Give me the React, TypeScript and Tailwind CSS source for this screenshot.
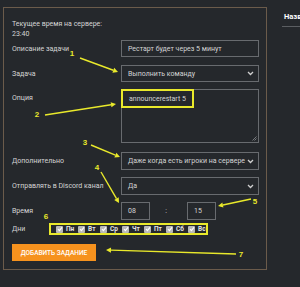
import React from "react";

const yellow = "#e9e92b";

function Chevron() {
  return (
    <svg width="7" height="5" viewBox="0 0 7 5" className="shrink-0">
      <path d="M1 1 L3.5 3.5 L6 1" stroke="#cfcfcf" strokeWidth="1.3" fill="none" />
    </svg>
  );
}

function Select(props: { value: string }) {
  return (
    <div className="flex h-[18px] w-[138px] items-center justify-between border border-[#686b6f] pl-[6px] pr-[4px]">
      <span className="whitespace-nowrap">{props.value}</span>
      <Chevron />
    </div>
  );
}

function Row(props: { label: string; children: React.ReactNode; className?: string }) {
  return (
    <div className={"flex items-center " + (props.className || "")}>
      <div className="w-[109px] shrink-0 whitespace-nowrap">{props.label}</div>
      {props.children}
    </div>
  );
}

function Check() {
  return (
    <span className="flex h-[7px] w-[7px] shrink-0 items-center justify-center rounded-[1px] bg-[#b9b9b9]">
      <svg width="6" height="6" viewBox="0 0 6 6">
        <path d="M1 3.2 L2.4 4.6 L5 1.4" stroke="#ffffff" strokeWidth="1.1" fill="none" />
      </svg>
    </span>
  );
}

function Arrow(props: { x1: number; y1: number; x2: number; y2: number }) {
  const { x1, y1, x2, y2 } = props;
  const a = Math.atan2(y2 - y1, x2 - x1);
  const len = 5;
  const w = 2.6;
  const bx = x2 - len * Math.cos(a);
  const by = y2 - len * Math.sin(a);
  const px = -Math.sin(a) * w;
  const py = Math.cos(a) * w;
  return (
    <g>
      <line x1={x1} y1={y1} x2={bx} y2={by} stroke={yellow} strokeWidth="1.4" />
      <polygon points={`${x2},${y2} ${bx + px},${by + py} ${bx - px},${by - py}`} fill={yellow} />
    </g>
  );
}

export default function App() {
  const days = ["Пн", "Вт", "Ср", "Чт", "Пт", "Сб", "Вс"];
  const nums: [string, number, number][] = [
    ["1", 72, 56],
    ["2", 37, 117],
    ["3", 85, 145],
    ["4", 97, 170],
    ["5", 255, 204],
    ["6", 46, 219],
    ["7", 241, 257],
  ];

  return (
    <div className="relative flex h-[287px] w-[300px] overflow-hidden bg-[#25282c] font-['Roboto','Liberation_Sans',Arial,sans-serif] text-[7px] leading-[10px] text-[#d4d4d4]">
      <div className="ml-[3px] mt-[7px] h-[263px] w-[264px] shrink-0 border border-[#6b5b4b] pl-[8px] pr-[7px] pt-[11px]">
        <div>Текущее время на сервере:</div>
        <div>23:40</div>

        <Row label="Описание задачи" className="mt-[1px]">
          <div className="flex h-[17px] w-[138px] items-center whitespace-nowrap border border-[#686b6f] pl-[6px]">
            Рестарт будет через 5 минут
          </div>
        </Row>

        <Row label="Задача" className="mt-[8px]">
          <div className="flex h-[17px] w-[138px] items-center justify-between border border-[#686b6f] pl-[6px] pr-[4px]">
            <span>Выполнить команду</span>
            <Chevron />
          </div>
        </Row>

        <div className="mt-[7px] flex">
          <div className="w-[109px] shrink-0 pt-[4px]">Опция</div>
          <div className="relative h-[54px] w-[138px] border border-[#686b6f]">
            <div
              className="absolute left-[-1px] top-[-1px] flex h-[19px] w-[73px] items-center whitespace-nowrap border-2 pl-[6px]"
              style={{ borderColor: yellow }}
            >
              announcerestart 5
            </div>
            <svg width="5" height="5" viewBox="0 0 5 5" className="absolute bottom-[1px] right-[1px]">
              <path d="M0.5 4.5 L4.5 0.5 M2.5 4.5 L4.5 2.5" stroke="#8a8d91" strokeWidth="0.8" />
            </svg>
          </div>
        </div>

        <Row label="Дополнительно" className="mt-[9px]">
          <Select value="Даже когда есть игроки на сервере" />
        </Row>

        <Row label="Отправлять в Discord канал" className="mt-[7px]">
          <Select value="Да" />
        </Row>

        <Row label="Время" className="mt-[7px]">
          <div className="flex items-center">
            <div className="flex h-[18px] w-[29px] items-center border border-[#686b6f] pl-[6px]">08</div>
            <div className="w-[37px] pr-[5px] text-center">:</div>
            <div className="flex h-[18px] w-[29px] items-center border border-[#686b6f] pl-[6px]">15</div>
          </div>
        </Row>

        <div className="mt-[3px] flex items-center">
          <div className="w-[37px] shrink-0">Дни</div>
          <div className="flex h-[12px] w-[159px] items-center border-2 pl-[5px]" style={{ borderColor: yellow }}>
            {days.map((d) => (
              <div key={d} className="flex w-[22px] shrink-0 items-center">
                <Check />
                <span className="ml-[3px] text-[6.5px] font-bold text-[#e6e6e6]">{d}</span>
              </div>
            ))}
          </div>
        </div>

        <button className="mt-[9px] flex h-[17px] w-[84px] items-center justify-center bg-[#f6921e] text-[6.5px] font-medium text-white uppercase">
          Добавить задание
        </button>
      </div>

      <div className="ml-[15px] mt-[8px] flex-1">
        <div className="border-b border-[#5b5e62] pb-[4px] pl-[2px] pt-[4px] text-[7.5px] font-bold whitespace-nowrap text-white">
          Название
        </div>
      </div>

      <svg width="300" height="287" className="pointer-events-none absolute left-0 top-0">
        <Arrow x1={80} y1={58} x2={118} y2={72} />
        <Arrow x1={45} y1={115} x2={116} y2={104} />
        <Arrow x1={91} y1={145} x2={120} y2={157} />
        <Arrow x1={101} y1={172} x2={119} y2={203} />
        <Arrow x1={251} y1={199} x2={218} y2={206} />
        <Arrow x1={236} y1={254} x2={106} y2={250} />
        {nums.map(([n, x, y]) => (
          <text key={n} x={x} y={y} fill={yellow} fontSize="8" fontWeight="bold" textAnchor="middle" fontFamily="Liberation Sans, Arial, sans-serif">
            {n}
          </text>
        ))}
      </svg>
    </div>
  );
}
